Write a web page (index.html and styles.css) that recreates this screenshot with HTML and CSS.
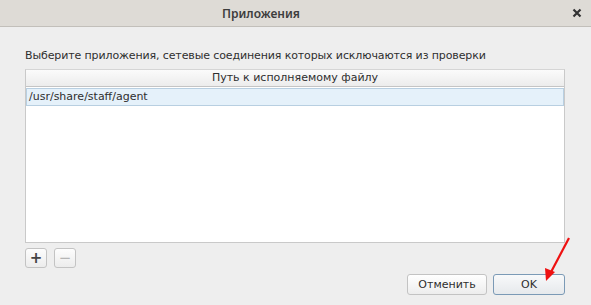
FILE: index.html
```html
<!DOCTYPE html>
<html>
<head>
	<meta charset="utf-8">
	<meta name="viewport" content="width=device-width">
	<title>Приложения</title>
	<link rel="stylesheet" href="styles.css">
</head>
<body>
	<div class="window">
		<header class="titlebar">
			<span class="title">Приложения</span>
			<svg class="close" width="10" height="10" viewBox="0 0 10 10">
				<path d="M1.5 1.5 L8.5 8.5 M8.5 1.5 L1.5 8.5" stroke="#333" stroke-width="2.2"/>
			</svg>
		</header>

		<section class="content">
			<p class="hint">Выберите приложения, сетевые соединения которых исключаются из проверки</p>
			<div class="table">
				<div class="thead">Путь к исполняемому файлу</div>
				<div class="row selected">/usr/share/staff/agent</div>
			</div>
			<div class="tools">
				<button type="button" class="tool">+</button>
				<button type="button" class="tool disabled">&minus;</button>
			</div>
			<div class="actions">
				<button type="button" class="btn">Отменить</button>
				<button type="button" class="btn default">OK</button>
			</div>
		</section>

		<svg class="arrow" width="40" height="60" viewBox="0 0 40 60">
			<line x1="33" y1="4" x2="14" y2="40" stroke="#ee1111" stroke-width="2.2"/>
			<polygon points="10,47 9,34 19,38" fill="#ee1111"/>
		</svg>
	</div>
</body>
</html>
```

FILE: styles.css
```css
body{
	margin: 0;
	padding: 0;
	font: 11px "DejaVu Sans", Verdana, sans-serif;
	color: #2e2e2e;
	background: #eeeeee;
}

.window{
	position: relative;
	width: 591px;
	height: 305px;
	overflow: hidden;
}

/* Title bar */
.titlebar{
	height: 27px;
	background: #dedbd6;
	border-bottom: 1px solid #c2bfba;
	box-sizing: border-box;
	display: flex;
	align-items: center;
	padding-left: 222px;
	padding-right: 9px;
}

.title{
	font: 600 12px "Noto Sans", sans-serif;
	color: #3d3d3d;
	flex: 1;
}

.close{
	display: block;
}

/* Content */
.content{
	padding: 0 26px 0 25px;
}

.hint{
	margin: 22px 0 6px 0;
	line-height: 14px;
	letter-spacing: -0.12px;
}

.table{
	height: 172px;
	background: #ffffff;
	border: 1px solid #c9c9c9;
	border-top-color: #d5d5d5;
}

.thead{
	height: 16px;
	line-height: 16px;
	text-align: center;
	background: linear-gradient(#fbfbfb, #ececec);
	border-bottom: 1px solid #c4c4c4;
}

.row{
	height: 16px;
	line-height: 16px;
	padding-left: 2px;
}

.row.selected{
	background: #e5f1fa;
	border: 1px solid #b8cfe1;
	margin: 1px 0 0 0;
}

.tools{
	display: flex;
	gap: 7px;
	margin-top: 5px;
}

.tool{
	width: 22px;
	height: 20px;
	padding: 0;
	font: bold 15px/18px "DejaVu Sans", sans-serif;
	color: #444;
	background: linear-gradient(#fdfdfd, #ececec);
	border: 1px solid #c3c3c3;
	border-radius: 3px;
}

.tool.disabled{
	color: #b5b5b5;
	font-weight: normal;
}

.actions{
	display: flex;
	justify-content: flex-end;
	gap: 6px;
	margin-top: 6px;
}

.btn{
	height: 21px;
	padding: 0;
	font: 11px "DejaVu Sans", sans-serif;
	color: #2e2e2e;
	background: linear-gradient(#ffffff, #ededed);
	border: 1px solid #c3c3c3;
	border-radius: 3px;
	width: 80px;
}

.btn.default{
	width: 72px;
	border-color: #7b9ab6;
	background: linear-gradient(#f8f9fa, #e6e9ec);
}

.arrow{
	position: absolute;
	left: 536px;
	top: 234px;
}
```
